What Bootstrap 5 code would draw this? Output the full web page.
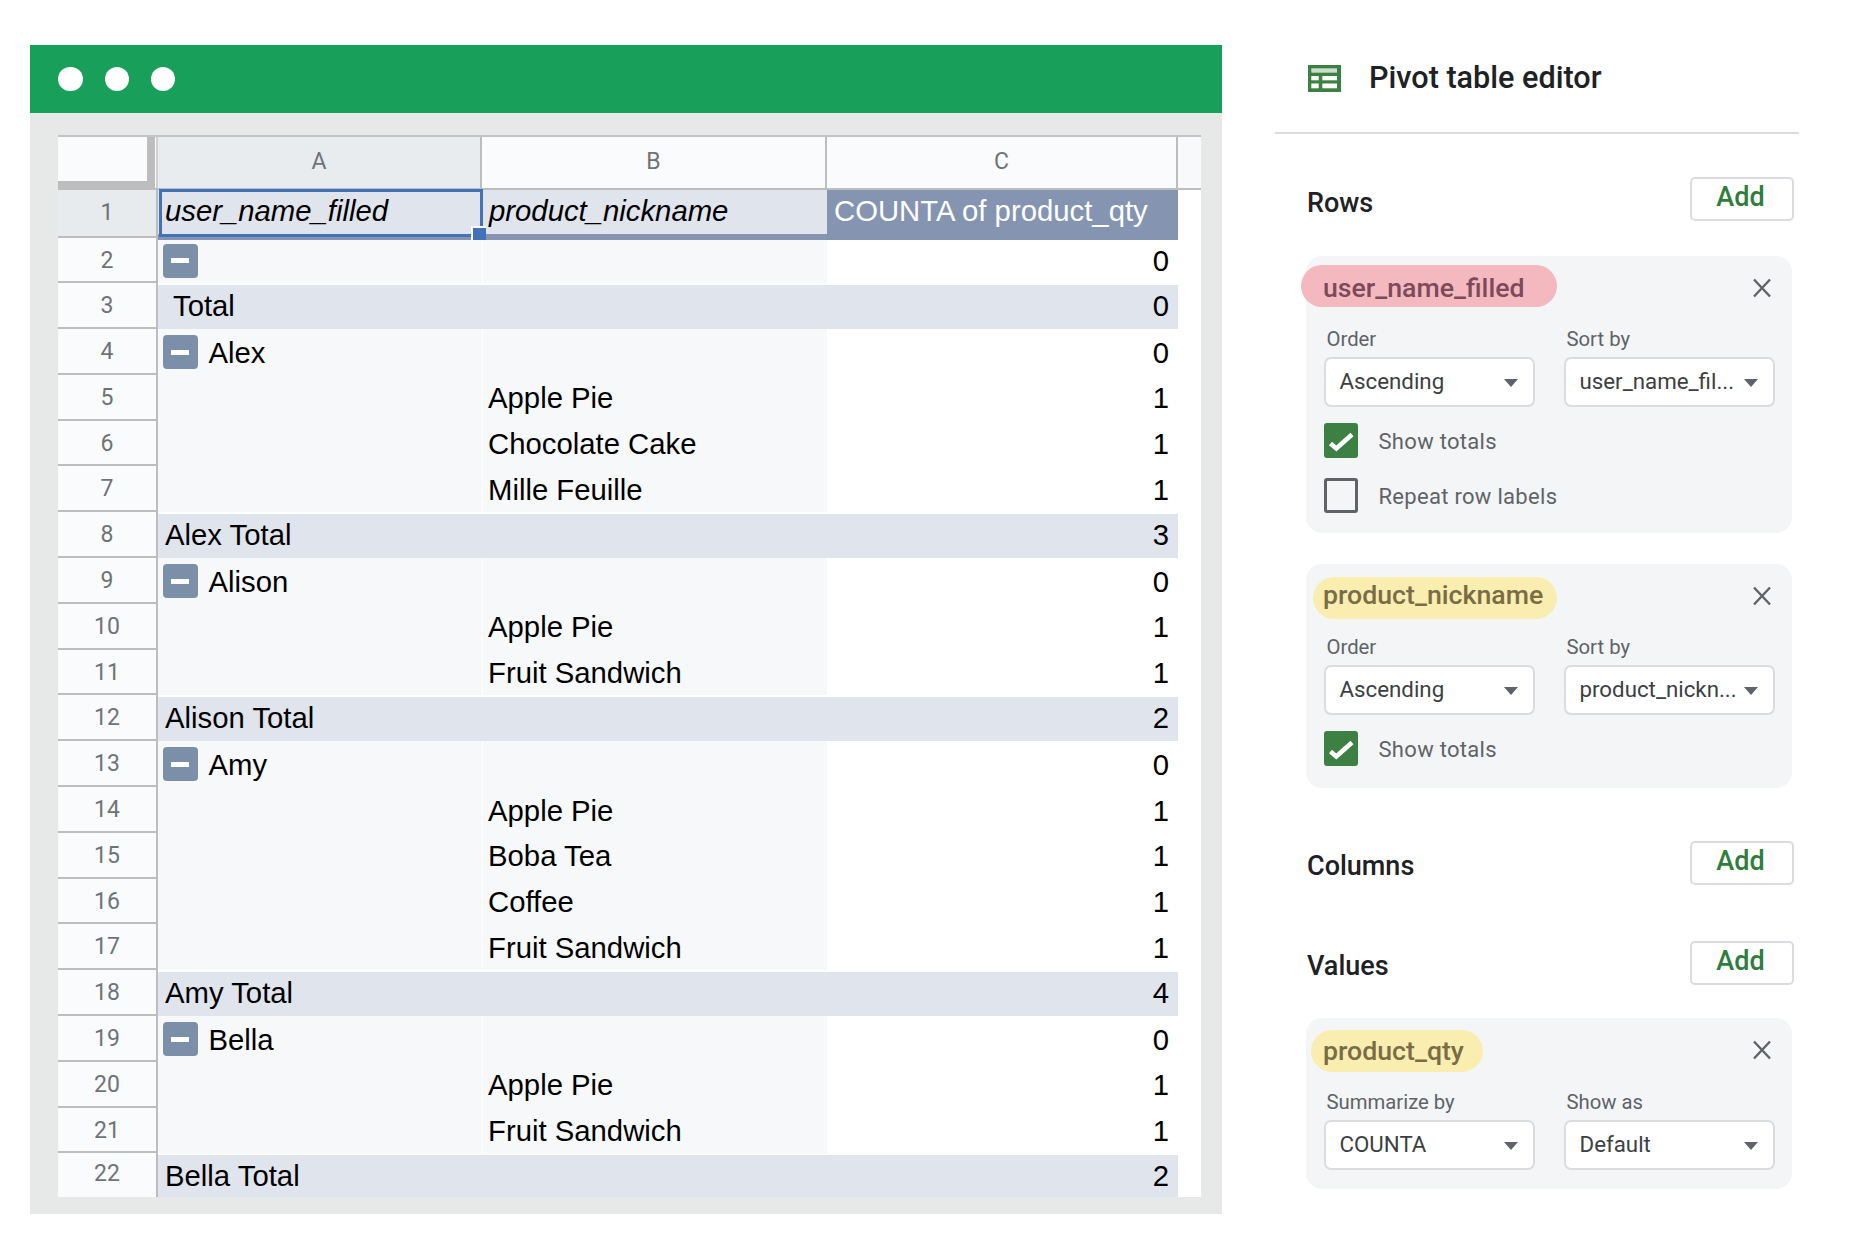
<!doctype html>
<html lang="en">
<head>
    <meta charset="utf-8">
    <meta name="viewport" content="width=device-width, initial-scale=1">
    <title>Pivot table editor</title>
    <link href="https://cdn.jsdelivr.net/npm/bootstrap@5.3.3/dist/css/bootstrap.min.css" rel="stylesheet">
    <style>
        body { background: #fff; font-family: Roboto, sans-serif; padding: 45px 0 0 30px; }

        /* left: browser-like window with the sheet */
        .win { width: 1192px; height: 1169px; background: #e7e9e8; flex-shrink: 0; }
        .win-bar { height: 68px; background: #189f5a; padding-left: 28.4px; gap: 21.8px; }
        .win-dot { width: 24.5px; height: 24.5px; border-radius: 50%; background: #fff; }
        .sheet { position: relative; margin: 22px 0 0 28px; width: 1142.5px; background: #fff; border-top: 2px solid #c4c4c4;
                 font-family: "Liberation Sans", Arial, sans-serif; font-size: 29.3px; color: #000; }
        .sh-row { display: flex; height: 45.8px; line-height: 45.8px; }
        .sh-head { height: 53px; border-bottom: 2px solid #bdbdbd; line-height: 50px; }
        .sh-top { height: 47.5px; line-height: 41px; position: relative; z-index: 1; }
        .sh-num, .sh-col { font-family: Roboto, sans-serif; font-size: 23px; color: #6f7378; text-align: center; }
        .sh-num { width: 100px; background: #fafbfd; border-right: 2px solid #bdbdbd; border-bottom: 2px solid #bdbdbd; flex-shrink: 0; }
        .sh-num.on { background: #e8ebee; line-height: 46px; }
        .sh-corner { width: 100px; background: #fafbfd; flex-shrink: 0; position: relative; border-right: 2px solid #d0d0d0; }
        .sh-corner::after { content: ""; position: absolute; left: 0; top: 0; width: 97px; height: 52px; border-right: 8px solid #bdbdbd; border-bottom: 8px solid #bdbdbd; }
        .sh-col { background: #fafbfd; border-right: 2px solid #bdbdbd; }
        .sh-col.on { background: #e9ecef; }
        .w-a { width: 324px; flex-shrink: 0; padding: .5px 0 0 7px; }
        .w-b { width: 345px; flex-shrink: 0; padding: .5px 0 0 5px; }
        .w-c { width: 351px; flex-shrink: 0; padding: .5px 9px 0 0; text-align: right; }
        .sh-col.w-a, .sh-col.w-b, .sh-col.w-c { padding: 0; text-align: center; }
        .sh-rest { flex: 1; background: #f8f9fb; }
        .sh-row .w-a, .sh-row .w-b { background: #f7f8fa; }
        .sh-row .w-b { border-left: 1px solid #fff; }
        .sh-row.sh-head .w-a { background: #e9ecef; border: 0; border-right: 2px solid #bdbdbd; }
        .sh-row.sh-head .w-b { background: #fafbfd; border: 0; border-right: 2px solid #bdbdbd; }
        .sh-row.sh-head .w-c { background: #fafbfd; border-right: 2px solid #bdbdbd; }
        .sh-row.sh-total .w-a, .sh-row.sh-total .w-b, .sh-row.sh-total .w-c { background: #e0e4ed; border: 0; margin-top: 2px; line-height: 40px; }
        .sh-row.sh-top .w-a, .sh-row.sh-top .w-b { background: #e0e4ed; border: 0; border-bottom: 6px solid #8594b0; font-style: italic; height: 49.5px; padding: 0 0 0 7px; }
        .sh-row.sh-top .w-c { background: #8594b0; color: #fff; text-align: left; padding: 0 0 0 7px; height: 49.5px; }
        .sh-minus { flex-shrink: 0; display: flex; align-items: center; justify-content: center; width: 35px; height: 34px; background: #7b90a8; border-radius: 4px;
                    margin: 5.5px 11px 0 -2.5px; }
        .sh-minus::before { content: ""; width: 18px; height: 5px; background: #fff; }
        .sh-indent { padding-left: 15px !important; }
        .sh-last { height: 44px; }
        .sh-last .sh-num { line-height: 42px; }
        .sel-box { position: absolute; left: 101px; top: 52px; width: 324px; height: 48px; border: 3px solid #4472b8; pointer-events: none; z-index: 2; }
        .sel-grip { position: absolute; right: -6px; bottom: -6px; width: 15px; height: 14px; background: #4472b8; border-left: 2px solid #fff; border-top: 2px solid #fff; }

        /* right: editor panel */
        .panel { width: 524px; margin-left: 53px; flex-shrink: 0; }
        .panel-top { height: 89px; border-bottom: 2px solid #dadce0; padding: 0 0 21px 33px; }
        .panel-title { font-size: 30.6px; font-weight: 500; color: #202124; margin-left: 28px; }
        .sec-head { padding: 0 5px 0 32px; height: 44px; font-size: 27px; font-weight: 500; color: #202124; }
        .sec-name { margin-top: 8px; }
        .sec-add { width: 104px; height: 44px; padding: 0 3px 3px 0; border: 2px solid #dadce0; border-radius: 5px; background: #fff; color: #2e7d3c; font-size: 27px; font-weight: 500; line-height: 1; }
        .sec-add:hover { background: #fff; color: #2e7d3c; border-color: #dadce0; }
        .sec-rows { margin-top: 43px; }
        .sec-cols { margin-top: 53px; }
        .sec-vals { margin-top: 56px; }
        .field-card { position: relative; margin-left: 31px; width: 485.5px; background: #f3f5f7; border-radius: 16px; padding: 9px 17px 0 17.5px; }
        .card-rows { margin-top: 35px; height: 277px; }
        .card-nick { margin-top: 31px; height: 223.5px; }
        .card-qty { margin-top: 33.5px; height: 171px; }
        .chip { display: block; width: fit-content; height: 42px; line-height: 46px; border-radius: 21px; font-size: 26.7px; font-weight: 500; }
        .chip-pink { background: #f4b8bf; color: #7d4a5a; margin-left: -22.5px; padding: 0 32px 0 22px; }
        .chip-yel { background: #f9edb0; color: #7a6c45; }
        .chip-nick { margin: 4px 0 -4px -10.5px; padding: 0 13.5px 0 10px; line-height: 37px; }
        .chip-qty { margin: 3px 0 -2px -12.5px; padding: 0 19px 0 12px; line-height: 43px; }
        .chip-x { position: absolute; right: 21px; top: 22px; width: 18px; height: 20px; display: block; }
        .fld { width: 211px; }
        .fld-label { font-size: 20.3px; color: #5f6368; line-height: 24px; padding-left: 3px; margin: 20px 0 6px; }
        .fld-sel { width: 100%; height: 50px; padding: 0 14px; background: #fff; border: 2px solid #dadce0; border-radius: 7px; font-size: 22.3px; color: #3c4043;
                   display: flex; align-items: center; justify-content: space-between; text-align: left; }
        .fld-sel:hover, .fld-sel:active { background: #fff; color: #3c4043; border-color: #dadce0; }
        .fld-sel::after { margin: 2px 1px 0 0; border-top: 8px solid #5f6368; border-left: 7.5px solid transparent; border-right: 7.5px solid transparent; border-bottom: 0; }
        .tick-row { display: flex; align-items: center; margin: 0; padding: 0; min-height: 0; }
        .tick-1 { margin-top: 16px; }
        .tick-2 { margin-top: 20px; }
        .tick-row .form-check-input { float: none; width: 34px; height: 35px; margin: 0 21px 0 0; border-radius: 3px; background-color: transparent; border: 3px solid #5f6368; box-shadow: none; }
        .tick-row .form-check-input:checked { background-color: #3d8043; border-color: #3d8043; background-size: 100% 100%;
            --bs-form-check-bg-image: url("data:image/svg+xml,%3csvg xmlns='http://www.w3.org/2000/svg' viewBox='0 0 28 29'%3e%3cpath fill='none' stroke='%23fff' stroke-width='4.6' d='M3.5 17.5 9.3 22.5 25 8.5'/%3e%3c/svg%3e"); }
        .tick-row .form-check-label { font-size: 22px; color: #5f6368; letter-spacing: .3px; opacity: 1; padding-top: 2px; }
    </style>
</head>
<body class="d-flex align-items-start">

    <!-- spreadsheet window -->
    <div class="win">
        <div class="win-bar d-flex align-items-center">
            <span class="win-dot"></span><span class="win-dot"></span><span class="win-dot"></span>
        </div>
        <div class="sheet">
            <div class="sh-row sh-head"><div class="sh-corner"></div><div class="sh-col on w-a">A</div><div class="sh-col w-b">B</div><div class="sh-col w-c">C</div><div class="sh-rest"></div></div>
            <div class="sh-row sh-top"><div class="sh-num on">1</div><div class="w-a">user_name_filled</div><div class="w-b">product_nickname</div><div class="w-c">COUNTA of product_qty</div></div>
            <div class="sh-row"><div class="sh-num">2</div><div class="w-a d-flex"><span class="sh-minus"></span></div><div class="w-b"></div><div class="w-c">0</div></div>
            <div class="sh-row sh-total"><div class="sh-num">3</div><div class="w-a sh-indent">Total</div><div class="w-b"></div><div class="w-c">0</div></div>
            <div class="sh-row"><div class="sh-num">4</div><div class="w-a d-flex"><span class="sh-minus"></span>Alex</div><div class="w-b"></div><div class="w-c">0</div></div>
            <div class="sh-row"><div class="sh-num">5</div><div class="w-a"></div><div class="w-b">Apple Pie</div><div class="w-c">1</div></div>
            <div class="sh-row"><div class="sh-num">6</div><div class="w-a"></div><div class="w-b">Chocolate Cake</div><div class="w-c">1</div></div>
            <div class="sh-row"><div class="sh-num">7</div><div class="w-a"></div><div class="w-b">Mille Feuille</div><div class="w-c">1</div></div>
            <div class="sh-row sh-total"><div class="sh-num">8</div><div class="w-a">Alex Total</div><div class="w-b"></div><div class="w-c">3</div></div>
            <div class="sh-row"><div class="sh-num">9</div><div class="w-a d-flex"><span class="sh-minus"></span>Alison</div><div class="w-b"></div><div class="w-c">0</div></div>
            <div class="sh-row"><div class="sh-num">10</div><div class="w-a"></div><div class="w-b">Apple Pie</div><div class="w-c">1</div></div>
            <div class="sh-row"><div class="sh-num">11</div><div class="w-a"></div><div class="w-b">Fruit Sandwich</div><div class="w-c">1</div></div>
            <div class="sh-row sh-total"><div class="sh-num">12</div><div class="w-a">Alison Total</div><div class="w-b"></div><div class="w-c">2</div></div>
            <div class="sh-row"><div class="sh-num">13</div><div class="w-a d-flex"><span class="sh-minus"></span>Amy</div><div class="w-b"></div><div class="w-c">0</div></div>
            <div class="sh-row"><div class="sh-num">14</div><div class="w-a"></div><div class="w-b">Apple Pie</div><div class="w-c">1</div></div>
            <div class="sh-row"><div class="sh-num">15</div><div class="w-a"></div><div class="w-b">Boba Tea</div><div class="w-c">1</div></div>
            <div class="sh-row"><div class="sh-num">16</div><div class="w-a"></div><div class="w-b">Coffee</div><div class="w-c">1</div></div>
            <div class="sh-row"><div class="sh-num">17</div><div class="w-a"></div><div class="w-b">Fruit Sandwich</div><div class="w-c">1</div></div>
            <div class="sh-row sh-total"><div class="sh-num">18</div><div class="w-a">Amy Total</div><div class="w-b"></div><div class="w-c">4</div></div>
            <div class="sh-row"><div class="sh-num">19</div><div class="w-a d-flex"><span class="sh-minus"></span>Bella</div><div class="w-b"></div><div class="w-c">0</div></div>
            <div class="sh-row"><div class="sh-num">20</div><div class="w-a"></div><div class="w-b">Apple Pie</div><div class="w-c">1</div></div>
            <div class="sh-row"><div class="sh-num">21</div><div class="w-a"></div><div class="w-b">Fruit Sandwich</div><div class="w-c">1</div></div>
            <div class="sh-row sh-total sh-last"><div class="sh-num border-bottom-0">22</div><div class="w-a">Bella Total</div><div class="w-b"></div><div class="w-c">2</div></div>
            <!-- active cell -->
            <div class="sel-box"><span class="sel-grip"></span></div>
        </div>
    </div>

    <!-- pivot editor -->
    <div class="panel">
        <div class="panel-top d-flex align-items-center">
            <svg width="33" height="27" viewBox="0 0 33 27"><rect width="33" height="27" fill="#3d8043"/><rect x="3.3" y="3.3" width="25.7" height="4.4" fill="#c9ddcb"/><rect x="3.3" y="11" width="7.4" height="4.3" fill="#fff"/><rect x="14.3" y="11" width="14.7" height="4.3" fill="#fff"/><rect x="3.3" y="18.5" width="7.4" height="4.8" fill="#fff"/><rect x="14.3" y="18.5" width="14.7" height="4.8" fill="#fff"/></svg>
            <span class="panel-title">Pivot table editor</span>
        </div>

        <div class="sec-head d-flex align-items-center justify-content-between sec-rows"><span class="sec-name">Rows</span> <button class="btn sec-add" type="button">Add</button></div>

        <div class="field-card card-rows">
            <span class="chip chip-pink">user_name_filled</span>
            <svg class="chip-x" viewBox="0 0 18 20"><path d="M1 1.5 17 18.5M17 1.5 1 18.5" stroke="#5f6368" stroke-width="2.4" fill="none"/></svg>
            <div class="d-flex justify-content-between">
                <div class="fld"><div class="fld-label">Order</div><button class="btn dropdown-toggle fld-sel" type="button">Ascending</button></div>
                <div class="fld"><div class="fld-label">Sort by</div><button class="btn dropdown-toggle fld-sel" type="button">user_name_fil...</button></div>
            </div>
            <div class="form-check tick-row tick-1"><input class="form-check-input" type="checkbox" id="t1" checked><label class="form-check-label" for="t1">Show totals</label></div>
            <div class="form-check tick-row tick-2"><input class="form-check-input" type="checkbox" id="t2"><label class="form-check-label" for="t2">Repeat row labels</label></div>
        </div>

        <div class="field-card card-nick">
            <span class="chip chip-yel chip-nick">product_nickname</span>
            <svg class="chip-x" viewBox="0 0 18 20"><path d="M1 1.5 17 18.5M17 1.5 1 18.5" stroke="#5f6368" stroke-width="2.4" fill="none"/></svg>
            <div class="d-flex justify-content-between">
                <div class="fld"><div class="fld-label">Order</div><button class="btn dropdown-toggle fld-sel" type="button">Ascending</button></div>
                <div class="fld"><div class="fld-label">Sort by</div><button class="btn dropdown-toggle fld-sel" type="button">product_nickn...</button></div>
            </div>
            <div class="form-check tick-row tick-1"><input class="form-check-input" type="checkbox" id="t3" checked><label class="form-check-label" for="t3">Show totals</label></div>
        </div>

        <div class="sec-head d-flex align-items-center justify-content-between sec-cols"><span class="sec-name">Columns</span> <button class="btn sec-add" type="button">Add</button></div>
        <div class="sec-head d-flex align-items-center justify-content-between sec-vals"><span class="sec-name">Values</span> <button class="btn sec-add" type="button">Add</button></div>

        <div class="field-card card-qty">
            <span class="chip chip-yel chip-qty">product_qty</span>
            <svg class="chip-x" viewBox="0 0 18 20"><path d="M1 1.5 17 18.5M17 1.5 1 18.5" stroke="#5f6368" stroke-width="2.4" fill="none"/></svg>
            <div class="d-flex justify-content-between">
                <div class="fld"><div class="fld-label">Summarize by</div><button class="btn dropdown-toggle fld-sel" type="button">COUNTA</button></div>
                <div class="fld"><div class="fld-label">Show as</div><button class="btn dropdown-toggle fld-sel" type="button">Default</button></div>
            </div>
        </div>
    </div>

    <script src="https://cdn.jsdelivr.net/npm/bootstrap@5.3.3/dist/js/bootstrap.bundle.min.js"></script>
</body>
</html>
